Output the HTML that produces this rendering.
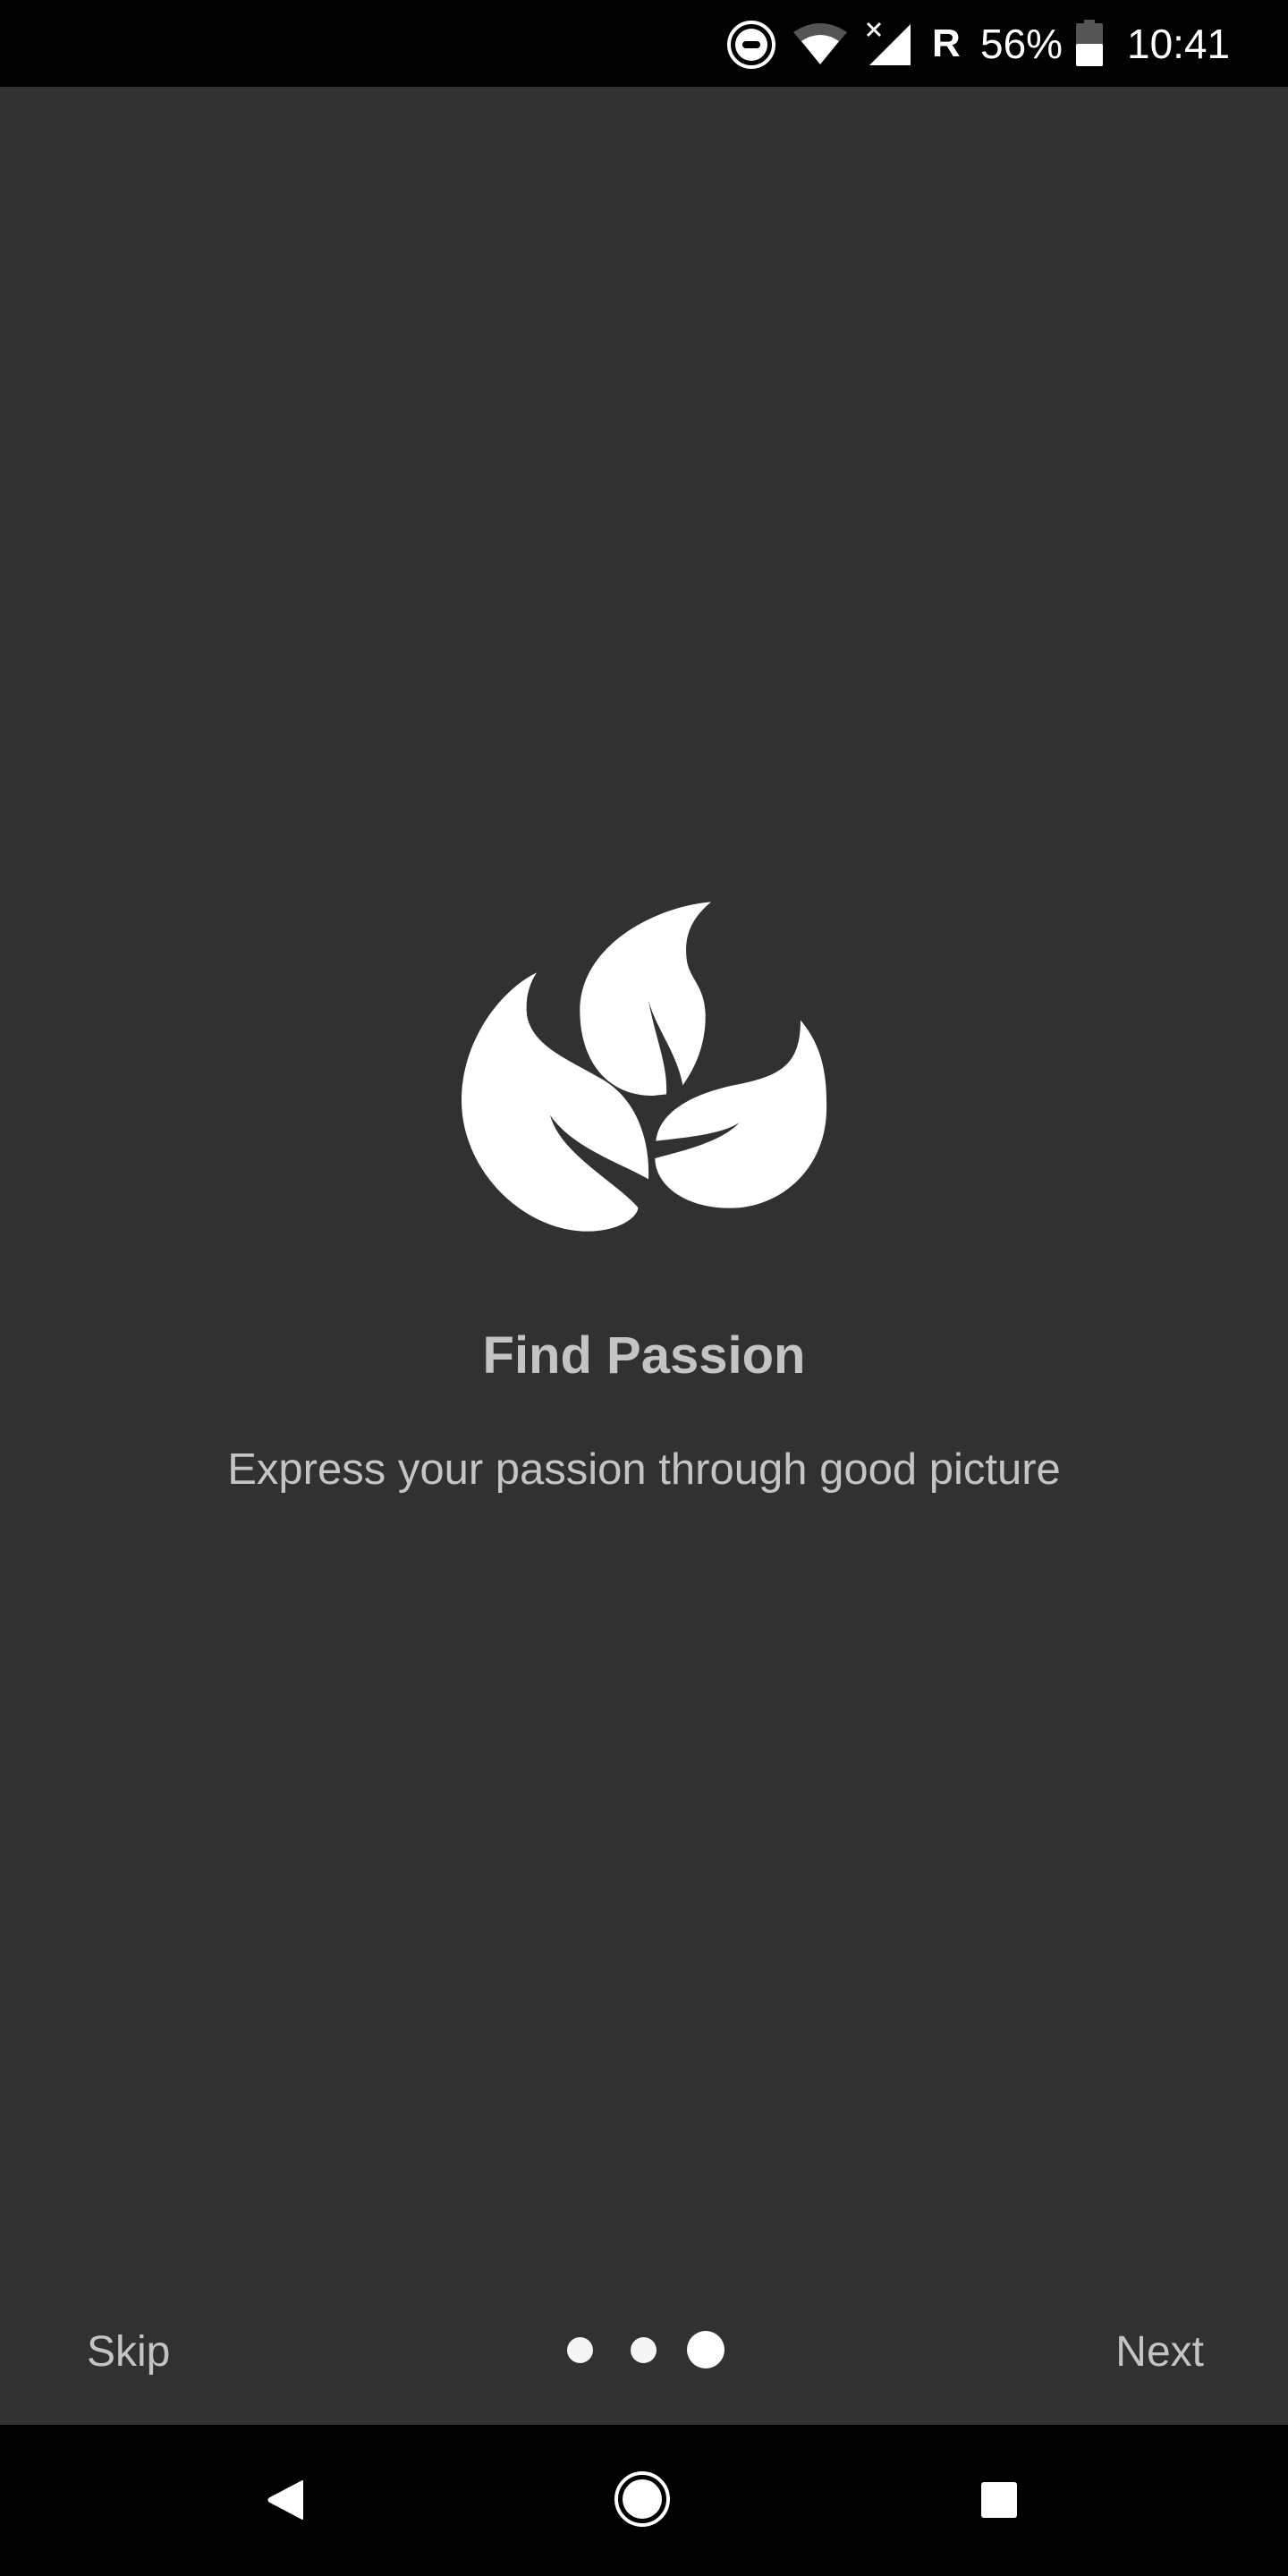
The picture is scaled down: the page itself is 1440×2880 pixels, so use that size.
<!DOCTYPE html>
<html><head><meta charset="utf-8">
<style>
html,body{margin:0;padding:0;}
body{width:1440px;height:2880px;background:#313131;position:relative;overflow:hidden;font-family:"Liberation Sans",sans-serif;}
.abs{position:absolute;}
#status{left:0;top:0;width:1440px;height:97px;background:#000;}
#nav{left:0;top:2711px;width:1440px;height:169px;background:#000;}
.st{color:#fff;position:absolute;top:22px;font-size:46px;line-height:54px;}
.title{left:0;width:1440px;text-align:center;top:1480px;font-size:58px;font-weight:bold;color:#c4c4c4;line-height:72px;}
.sub{left:0;width:1440px;text-align:center;top:1614px;font-size:49px;color:#c4c4c4;line-height:58px;}
.btn{top:2600px;font-size:48px;color:#c4c4c4;line-height:60px;}
.dot{border-radius:50%;background:#f5f5f5;}
</style></head><body>
<div id="status" class="abs">
  <svg class="abs" style="left:812px;top:22px" width="56" height="56" viewBox="0 0 56 56">
    <circle cx="28" cy="28" r="25" fill="none" stroke="#fff" stroke-width="4"/>
    <circle cx="28" cy="28" r="18" fill="#fff"/>
    <rect x="18" y="24" width="20" height="8" rx="4" fill="#000"/>
  </svg>
  <svg class="abs" style="left:886px;top:24px" width="62" height="50" viewBox="0 0 62 50">
    <path d="M1,12 Q31,-8 61,12 L31,48 Z" fill="#555"/>
    <path d="M10,22 Q31,8 52,22 L31,48 Z" fill="#fff"/>
  </svg>
  <svg class="abs" style="left:968px;top:24px" width="52" height="52" viewBox="0 0 52 52">
    <path d="M50,3 L50,49 L4,49 Z" fill="#fff"/>
    <path d="M2,2 L16,16 M16,2 L2,16" stroke="#fff" stroke-width="3"/>
  </svg>
  <div class="st" style="left:1042px;font-weight:bold;font-size:44px">R</div>
  <div class="st" style="left:1096px">56%</div>
  <svg class="abs" style="left:1203px;top:22px" width="30" height="52" viewBox="0 0 30 52">
    <rect x="9" y="0" width="12" height="5" fill="#555"/>
    <rect x="0" y="4" width="30" height="48" rx="2" fill="#555"/>
    <rect x="0" y="27" width="30" height="25" rx="2" fill="#fff"/>
  </svg>
  <div class="st" style="left:1260px">10:41</div>
</div>

<svg class="abs" style="left:500px;top:990px" width="440" height="410" viewBox="0 0 1320 1230">
  <g fill="#fff">
    <path d="M300,292 C180,350 48,520 48,720 C48,960 260,1160 470,1160 C580,1160 640,1110 640,1080 C560,990 380,900 345,770 C420,880 580,930 675,985 C680,860 640,720 520,650 C400,580 290,540 268,440 C260,380 275,330 300,292 Z"/>
    <path d="M885,55 C700,70 445,200 445,420 C445,580 530,705 690,705 L735,700 C740,600 700,520 675,385 C700,480 770,560 790,670 C840,600 868,520 866,430 C862,340 820,320 805,260 C790,170 820,110 885,55 Z"/>
    <path d="M1185,452 C1260,540 1275,640 1272,760 C1265,960 1110,1082 950,1082 C790,1082 697,1000 697,915 C790,890 920,860 980,795 C920,835 800,845 700,857 C710,760 820,700 960,670 C1120,640 1185,600 1185,452 Z"/>
  </g>
</svg>

<div class="abs title">Find Passion</div>
<div class="abs sub">Express your passion through good picture</div>

<div class="abs btn" style="left:97px">Skip</div>
<div class="abs btn" style="right:94px">Next</div>
<div class="abs dot" style="left:634px;top:2613px;width:29px;height:29px"></div>
<div class="abs dot" style="left:705px;top:2613px;width:29px;height:29px"></div>
<div class="abs dot" style="left:768px;top:2606px;width:42px;height:42px;background:#fff"></div>

<div id="nav" class="abs">
  <svg class="abs" style="left:298px;top:61px" width="44" height="46" viewBox="0 0 44 46">
    <path d="M40,2 L40,44 L4,25 Q1,23 4,21 Z" fill="#fff" stroke="#fff" stroke-width="2" stroke-linejoin="round"/>
  </svg>
  <svg class="abs" style="left:686px;top:51px" width="64" height="64" viewBox="0 0 64 64">
    <circle cx="32" cy="32" r="29" fill="none" stroke="#fff" stroke-width="4"/>
    <circle cx="32" cy="32" r="22" fill="#fff"/>
  </svg>
  <div class="abs" style="left:1097px;top:64px;width:40px;height:40px;background:#fff;border-radius:3px"></div>
</div>
</body></html>
